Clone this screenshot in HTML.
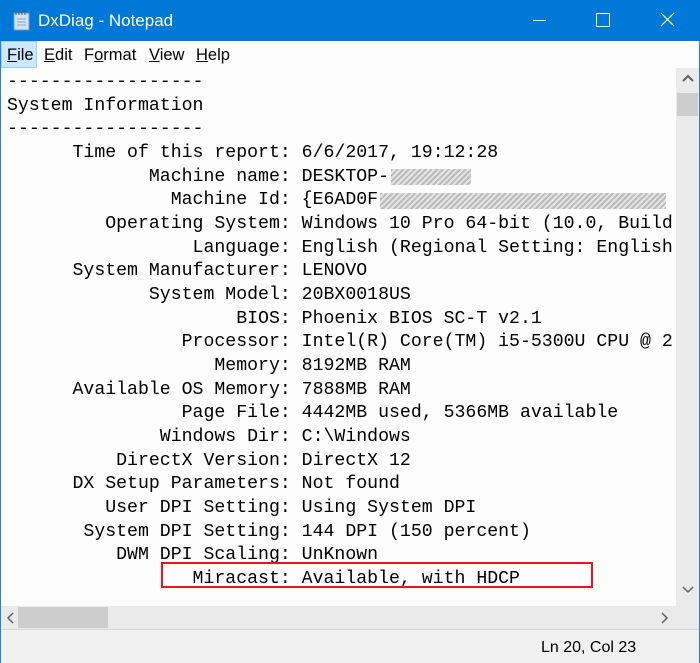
<!DOCTYPE html>
<html><head><style>
body{margin:0;width:700px;height:663px;overflow:hidden;background:#fff;font-family:"Liberation Sans",sans-serif;position:relative}
.title{position:absolute;left:0;top:0;width:700px;height:41px;background:#0078d7;color:#fff;font-size:17px}
.title span{position:absolute;left:38px;top:11px}
.menu{position:absolute;left:1px;top:41px;width:698px;height:27px;background:#fcfcfc;font-size:16.5px}
.menu span{position:absolute;top:5px}
.edit{position:absolute;left:1px;top:68px;width:675px;height:538px;background:#fcfcfc;overflow:hidden}
pre{margin:0;position:absolute;left:6px;top:3px;font-family:"Liberation Mono",monospace;font-size:18.2px;line-height:23.67px;color:#000}
.vs{position:absolute;left:676px;top:68px;width:23px;height:538px;background:#eaeaea}
.hs{position:absolute;left:1px;top:606px;width:675px;height:23px;background:#eaeaea}
.corner{position:absolute;left:676px;top:606px;width:23px;height:23px;background:#eaeaea}
.status{position:absolute;left:1px;top:629px;width:698px;height:33px;background:#f0f0f0;border-top:1px solid #d7d7d7;font-size:16px}
.blur{position:absolute;height:16px;background:repeating-linear-gradient(135deg,#bbb 0 2px,#e4e4e4 2px 4px)}
</style></head><body>
<div style="position:absolute;left:0;top:0;width:700px;height:663px;background:#2b7fd4"></div>
<div class="title">
<svg style="position:absolute;left:13px;top:11px" width="18" height="20"><rect x="1" y="2" width="15" height="17" fill="#cfe3f3" stroke="#7a9ab5"/><path d="M3 1v3M6 1v3M9 1v3M12 1v3" stroke="#555"/><path d="M4 8h9M4 11h9M4 14h9" stroke="#8ab"/></svg>
<span>DxDiag - Notepad</span>
<div style="position:absolute;left:533px;top:20px;width:13px;height:1px;background:#fff"></div>
<div style="position:absolute;left:596px;top:13px;width:12px;height:12px;border:1px solid #fff"></div>
<svg style="position:absolute;left:660px;top:12px" width="15" height="15"><path d="M1 1L14 14M14 1L1 14" stroke="#fff" stroke-width="1.2"/></svg>
</div>
<div class="menu">
<div style="position:absolute;left:0;top:0;width:36px;height:27px;background:#cce8ff;border:1px solid #99d1ff;box-sizing:border-box"></div>
<span style="left:6px"><u>F</u>ile</span><span style="left:43px"><u>E</u>dit</span><span style="left:83px">F<u>o</u>rmat</span><span style="left:148px"><u>V</u>iew</span><span style="left:195px"><u>H</u>elp</span>
</div>
<div class="edit"><pre>------------------
System Information
------------------
      Time of this report: 6/6/2017, 19:12:28
             Machine name: DESKTOP-
               Machine Id: {E6AD0F
         Operating System: Windows 10 Pro 64-bit (10.0, Build
                 Language: English (Regional Setting: English
      System Manufacturer: LENOVO
             System Model: 20BX0018US
                     BIOS: Phoenix BIOS SC-T v2.1
                Processor: Intel(R) Core(TM) i5-5300U CPU @ 2
                   Memory: 8192MB RAM
      Available OS Memory: 7888MB RAM
                Page File: 4442MB used, 5366MB available
              Windows Dir: C:\Windows
          DirectX Version: DirectX 12
      DX Setup Parameters: Not found
         User DPI Setting: Using System DPI
       System DPI Setting: 144 DPI (150 percent)
          DWM DPI Scaling: UnKnown
                 Miracast: Available, with HDCP</pre>
<div class="blur" style="left:390px;top:101px;width:80px"></div>
<div class="blur" style="left:379px;top:125px;width:286px"></div>
<div style="position:absolute;left:160px;top:494px;width:432px;height:26px;border:2px solid #e8161b;box-sizing:border-box"></div>
</div>
<div class="vs"><div style="position:absolute;left:1px;top:25px;width:21px;height:23px;background:#cdcdcd"></div>
<svg style="position:absolute;left:6px;top:6px" width="12" height="8"><path d="M1 7L6 2L11 7" stroke="#606060" stroke-width="2" fill="none"/></svg>
<svg style="position:absolute;left:6px;top:518px" width="12" height="8"><path d="M1 1L6 6L11 1" stroke="#606060" stroke-width="1.5" fill="none"/></svg></div>
<div class="hs"><div style="position:absolute;left:17px;top:1px;width:90px;height:21px;background:#cdcdcd"></div>
<svg style="position:absolute;left:5px;top:6px" width="8" height="12"><path d="M7 1L2 6L7 11" stroke="#606060" stroke-width="1.5" fill="none"/></svg>
<svg style="position:absolute;left:660px;top:6px" width="8" height="12"><path d="M1 1L6 6L1 11" stroke="#606060" stroke-width="1.5" fill="none"/></svg></div>
<div class="corner"></div>
<div class="status"><span style="position:absolute;left:540px;top:9px">Ln 20, Col 23</span></div>
</body></html>
